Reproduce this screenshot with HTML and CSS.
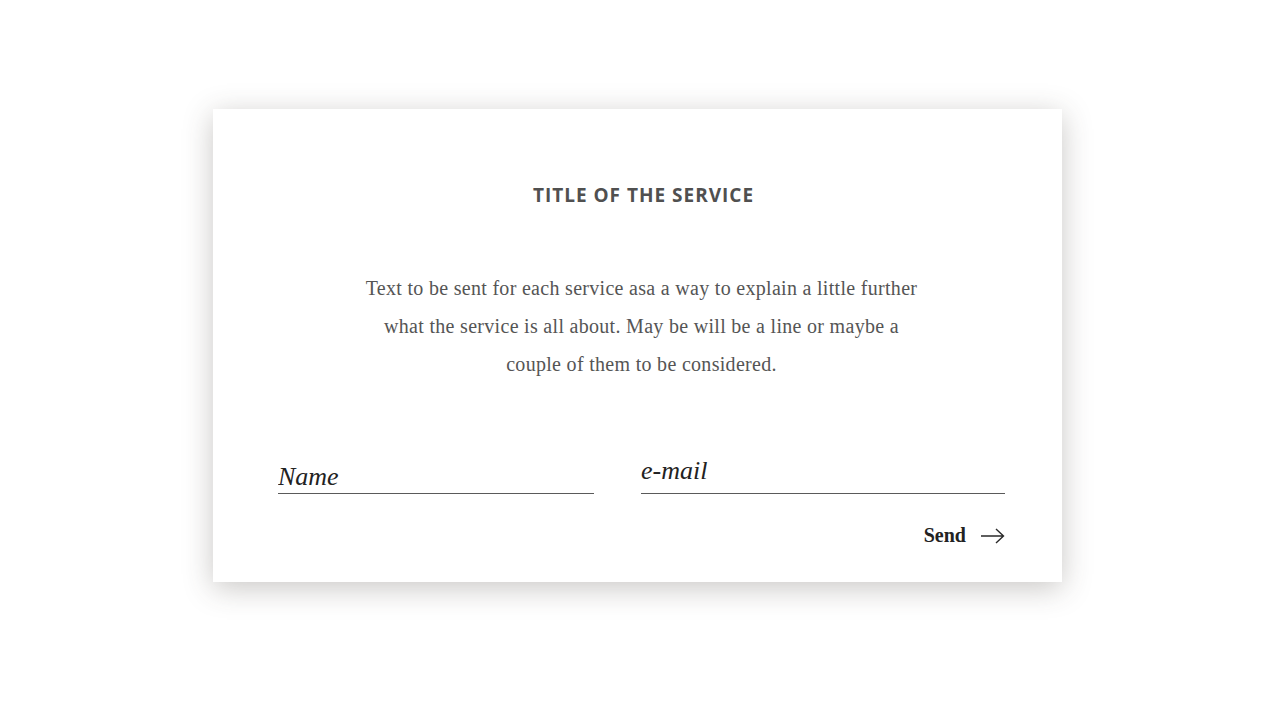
FILE: index.html
```html
<!DOCTYPE html>
<html lang="en">
<head>
<meta charset="utf-8">
<title>Service</title>
<link rel="stylesheet" href="styles.css">
</head>
<body>
<main class="card">
  <h1 class="title">TITLE OF THE SERVICE</h1>
  <p class="text">Text to be sent for each service asa a way to explain a little further what the service is all about. May be will be a line or maybe a couple of them to be considered.</p>
  <form class="form">
    <div class="fields">
      <input class="field field-name" type="text" placeholder="Name">
      <input class="field field-email" type="email" placeholder="e-mail">
    </div>
    <div class="actions">
      <button type="button" class="send">Send
        <svg class="arrow" width="25" height="16" viewBox="0 0 25 16" aria-hidden="true"><path d="M1 8H23.5M16 1L23.5 8L16 15" fill="none" stroke="#2a2a2a" stroke-width="1.4"/></svg>
      </button>
    </div>
  </form>
</main>
</body>
</html>
```
FILE: styles.css
```css
html, body {
  margin: 0;
  padding: 0;
  background: #ffffff;
}
body {
  font-family: "Liberation Serif", serif;
  min-height: 720px;
  padding-top: 109px;
  box-sizing: border-box;
}
.card {
  box-sizing: border-box;
  width: 849px;
  height: 473px;
  margin: 0 0 0 213px;
  background: #fff;
  box-shadow: 0 6px 28px rgba(60, 55, 45, 0.28);
  padding: 75px 57px 0 65px;
  display: flex;
  flex-direction: column;
}
.title {
  margin: 0;
  font-family: "Open Sans", "DejaVu Sans", sans-serif;
  font-weight: 700;
  font-size: 19px;
  line-height: 22px;
  letter-spacing: 1px;
  color: #505050;
  text-align: center;
  padding-left: 4px;
}
.text {
  margin: 63px auto 0;
  width: 562px;
  font-size: 20px;
  line-height: 38px;
  letter-spacing: 0.3px;
  color: #555;
  text-align: center;
}
.form {
  margin-top: 72px;
}
.fields {
  display: flex;
  gap: 47px;
}
.field {
  box-sizing: border-box;
  border: 0;
  border-bottom: 1px solid #5a5a5a;
  background: transparent;
  outline: none;
  font-family: "Liberation Serif", serif;
  font-style: italic;
  font-size: 26px;
  color: #222;
  padding: 0;
  height: 39px;
}
.field::placeholder {
  color: #222;
  opacity: 1;
}
.field-name {
  width: 316px;
  padding-top: 6px;
}
.field-email {
  flex: 1;
  padding-bottom: 6px;
}
.actions {
  display: flex;
  justify-content: flex-end;
  margin-top: 30px;
}
.send {
  display: flex;
  align-items: center;
  gap: 14px;
  border: 0;
  background: none;
  padding: 0;
  font-family: "Liberation Serif", serif;
  font-weight: 700;
  font-size: 20px;
  color: #222;
  cursor: pointer;
}
.arrow {
  display: block;
}
```
